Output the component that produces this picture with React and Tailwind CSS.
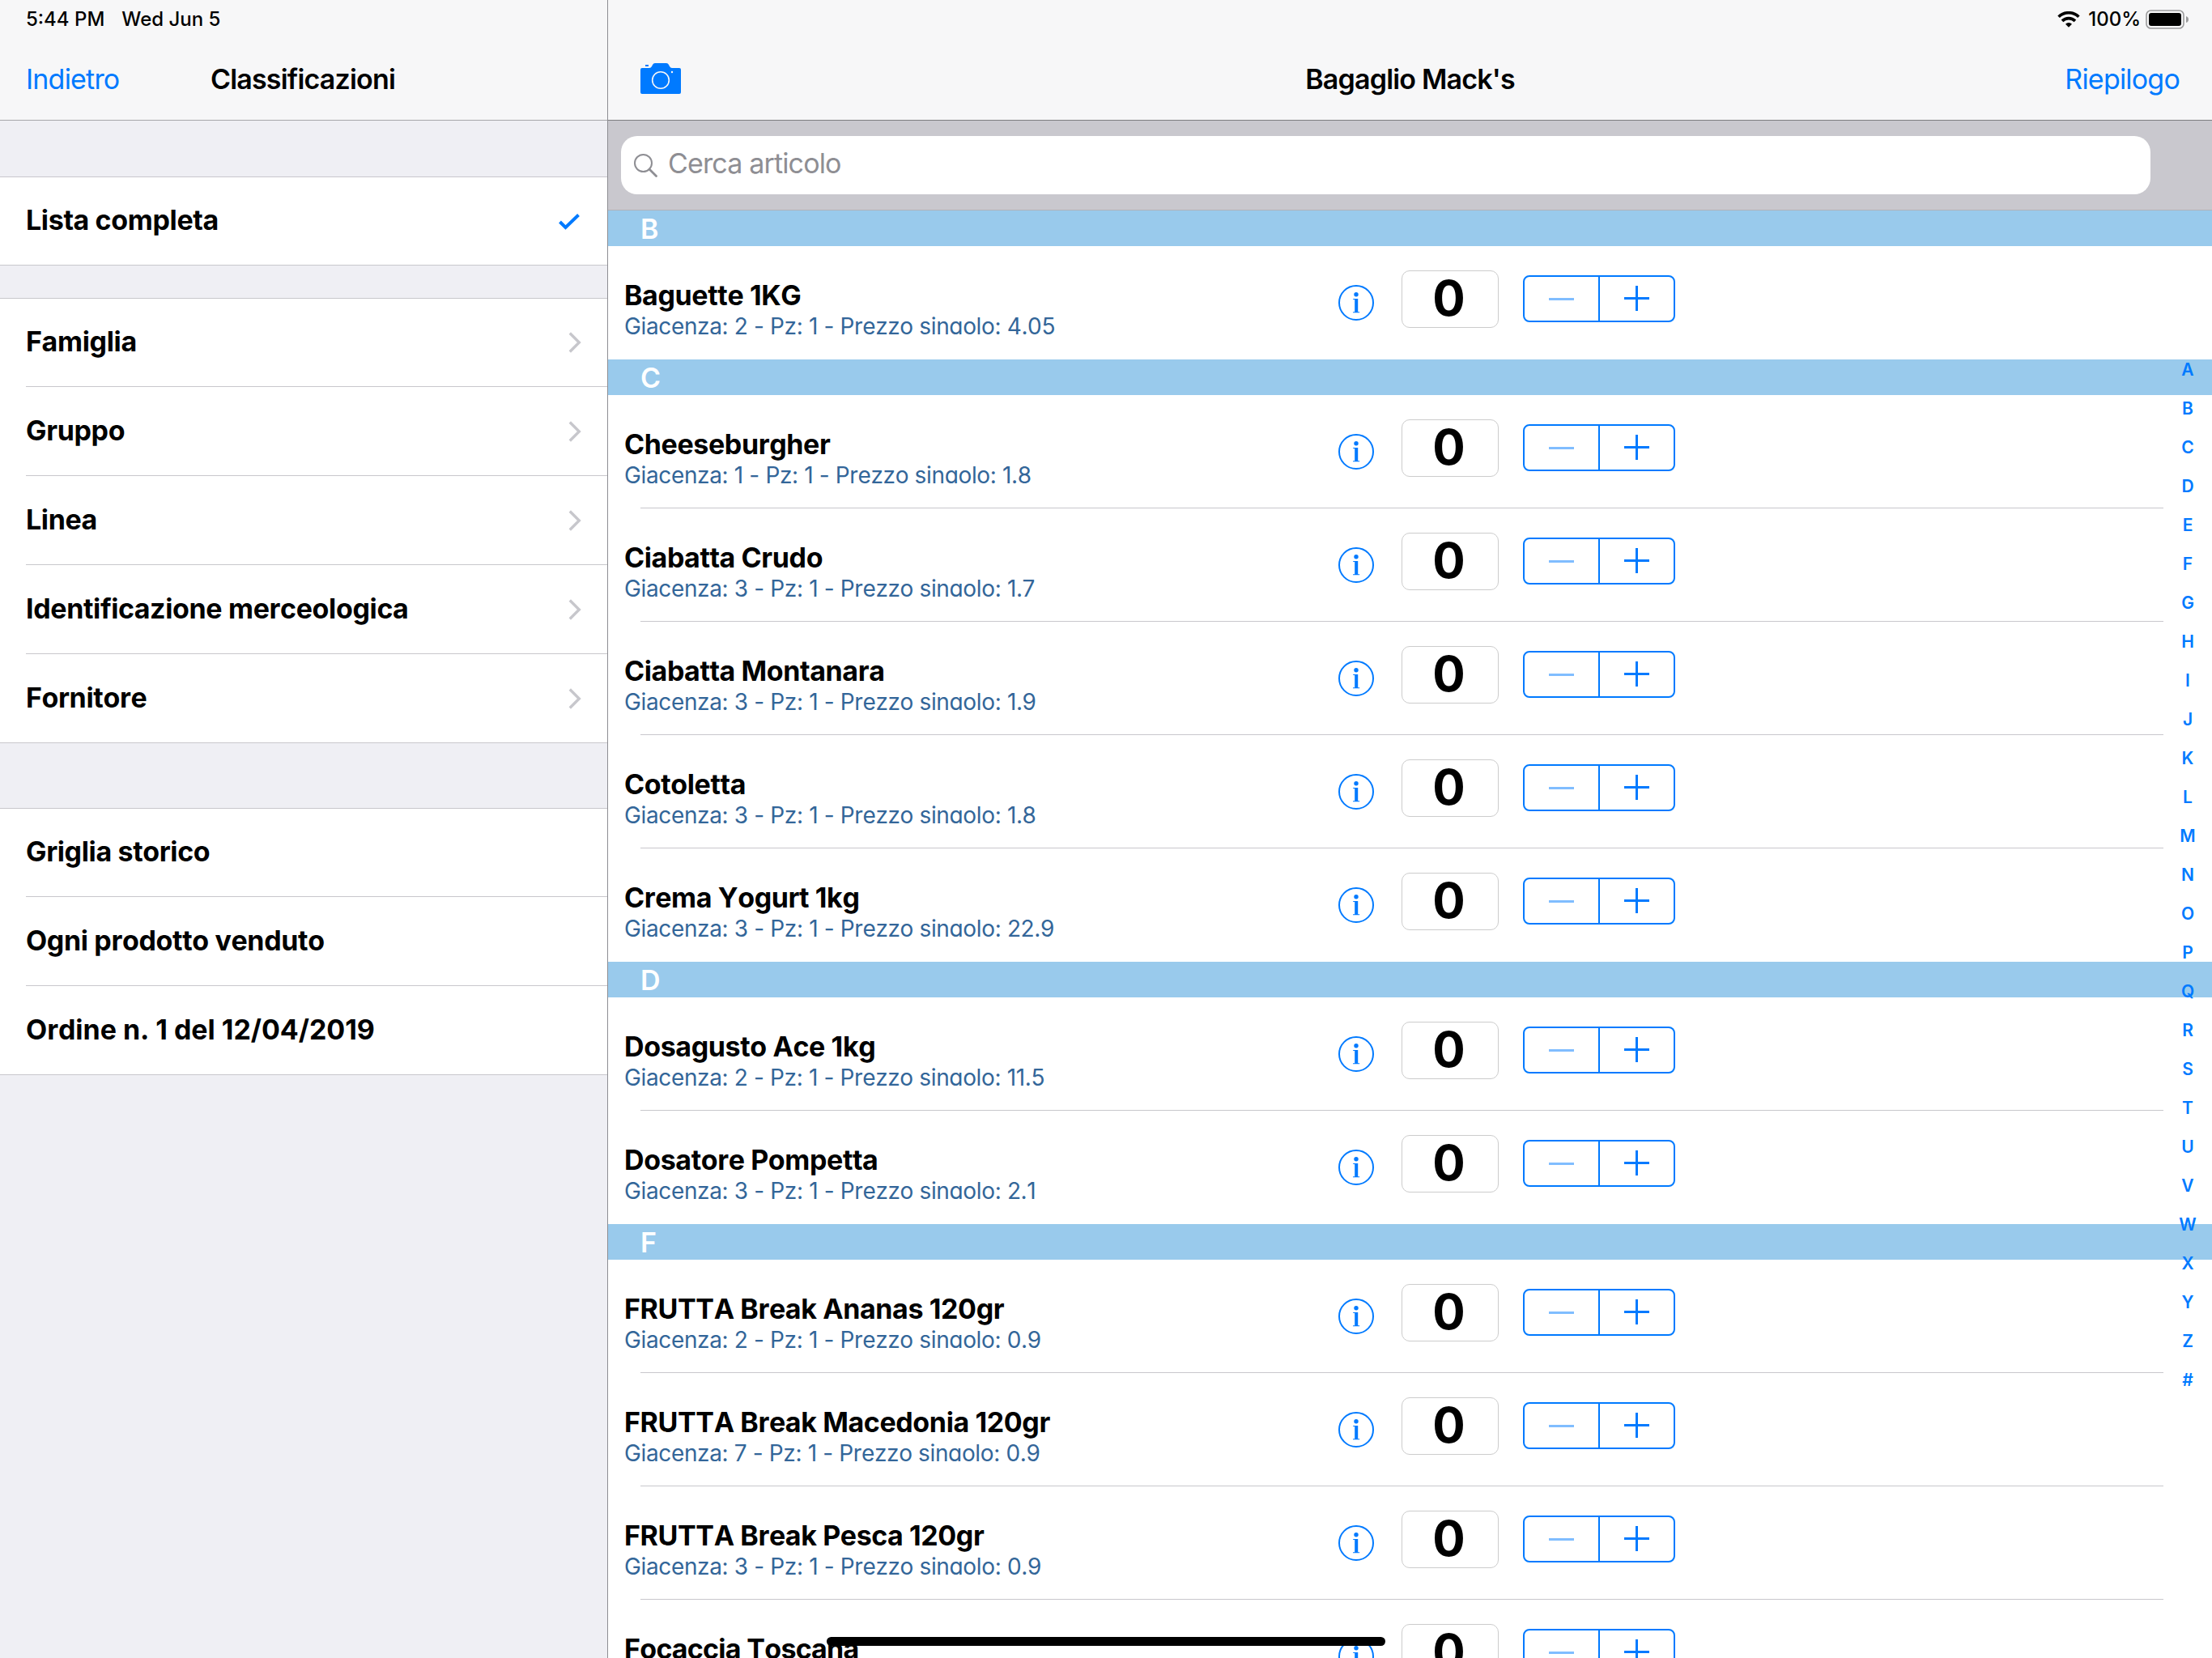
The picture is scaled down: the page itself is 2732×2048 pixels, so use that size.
import React from "react";

const menuGroups = [
  { space: "h-[69px]", items: [{ label: "Lista completa", checked: true }] },
  {
    space: "h-10",
    items: [
      { label: "Famiglia", arrow: true },
      { label: "Gruppo", arrow: true },
      { label: "Linea", arrow: true },
      { label: "Identificazione merceologica", arrow: true },
      { label: "Fornitore", arrow: true },
    ],
  },
  {
    space: "h-20",
    items: [
      { label: "Griglia storico" },
      { label: "Ogni prodotto venduto" },
      { label: "Ordine n. 1 del 12/04/2019", tracking: "tracking-[-0.040px]" },
    ],
  },
];

const sections = [
  { letter: "B", items: [["Baguette 1KG", 2, "4.05"]] },
  {
    letter: "C",
    items: [
      ["Cheeseburgher", 1, "1.8"],
      ["Ciabatta Crudo", 3, "1.7"],
      ["Ciabatta Montanara", 3, "1.9"],
      ["Cotoletta", 3, "1.8"],
      ["Crema Yogurt 1kg", 3, "22.9"],
    ],
  },
  {
    letter: "D",
    items: [
      ["Dosagusto Ace 1kg", 2, "11.5"],
      ["Dosatore Pompetta", 3, "2.1"],
    ],
  },
  {
    letter: "F",
    items: [
      ["FRUTTA Break Ananas 120gr", 2, "0.9"],
      ["FRUTTA Break Macedonia 120gr", 7, "0.9"],
      ["FRUTTA Break Pesca 120gr", 3, "0.9"],
      ["Focaccia Toscana", 3, "1.9", "tracking-[-0.700px]"],
    ],
  },
];

const indexLetters = "ABCDEFGHIJKLMNOPQRSTUVWXYZ#".split("");

const CameraIcon = () => (
  <svg className="w-[50px] h-[38px]" viewBox="0 0 50 38" fill="none">
    <path
      d="M2 6h9q2 0 3-2l1-2q1-2 3-2h14q2 0 3 2l1 2q1 2 3 2h9q2 0 2 2v28q0 2-2 2H2q-2 0-2-2V8q0-2 2-2z"
      fill="#007aff"
    />
    <path d="M6 2h4v2H6z" fill="#007aff" />
    <circle cx="25" cy="21" r="10.300" stroke="#f7f7f8" strokeWidth="1.600" />
    <circle cx="39" cy="11" r="1.200" fill="#f7f7f8" />
  </svg>
);

const WifiIcon = () => (
  <svg className="w-[28px] h-[20px]" viewBox="0 0 28 20" fill="none" stroke="#000" strokeWidth="3.600">
    <path d="M1.600 6.800a17.600 17.600 0 0 1 24.800 0" />
    <path d="M6 11.900a11.400 11.400 0 0 1 16 0" />
    <path d="M14 19.800l-4-4a5.600 5.600 0 0 1 8 0z" fill="#000" stroke="none" />
  </svg>
);

const BatteryIcon = () => (
  <svg className="w-[54px] h-[24px]" viewBox="0 0 54 24" fill="none">
    <rect x="1" y="1" width="46" height="22" rx="5.500" stroke="#9b9b9c" strokeWidth="1.600" />
    <rect x="4" y="4" width="40" height="16" rx="3" fill="#000" />
    <path d="M50 8q3 1 3 4t-3 4z" fill="#9b9b9c" />
  </svg>
);

const SearchIcon = () => (
  <svg className="w-[29px] h-[29px]" viewBox="0 0 29 29" fill="none" stroke="#8e8e93" strokeWidth="2">
    <circle cx="11.500" cy="11.500" r="10.500" />
    <path d="M19 19l8.500 8.500" strokeWidth="2.800" strokeLinecap="round" />
  </svg>
);

const CheckIcon = () => (
  <svg className="w-[26px] h-[20px] mt-[2px]" viewBox="0 0 26 20" fill="none" stroke="#007aff" strokeWidth="4">
    <path d="M1.500 10l7 7L24.500 1.500" />
  </svg>
);

const Chevron = () => (
  <svg className="w-[16px] h-[26px] -mr-[2px]" viewBox="0 0 16 26" fill="none" stroke="#c7c7cc" strokeWidth="3.400">
    <path d="M1.800 1.500L13.300 13 1.800 24.500" />
  </svg>
);

const InfoIcon = () => (
  <svg className="w-[44px] h-[44px]" viewBox="0 0 44 44" fill="none">
    <circle cx="22" cy="22" r="21" stroke="#007aff" strokeWidth="2" />
    <circle cx="22" cy="11.700" r="2.700" fill="#007aff" />
    <path d="M18.200 17h6v16.200h2v1H18v-1h2.200V18h-2z" fill="#007aff" />
  </svg>
);

const Stepper = () => (
  <div className="w-[188px] h-[58px] flex border-2 border-[#007aff] rounded-[8px]">
    <div className="w-[93px] flex items-center justify-center border-r-2 border-[#007aff]">
      <div className="w-[31px] h-[3px] bg-[#80bdff] mt-[1px]"></div>
    </div>
    <div className="flex-1 flex items-center justify-center">
      <svg className="w-[31px] h-[31px] -mt-[1px]" viewBox="0 0 31 31">
        <path d="M0 14h14V0h3v14h14v3H17v14h-3V17H0z" fill="#007aff" />
      </svg>
    </div>
  </div>
);

const MenuItem = ({ item, first, last }) => (
  <div className={`h-[110px] bg-white flex ${first ? "border-t border-[#c8c7cc]" : ""} ${last ? "border-b border-[#c8c7cc]" : "pl-8"}`}>
    <div className={`flex-1 flex items-center justify-between pr-[34px] ${last ? "pl-8" : "border-b border-[#c8c7cc]"}`}>
      <span className={`text-[34px] font-bold whitespace-nowrap [font-kerning:none] mb-[3px] ${item.tracking || "tracking-[-0.350px]"}`}>
        {item.label}
      </span>
      {item.checked && <CheckIcon />}
      {item.arrow && <Chevron />}
    </div>
  </div>
);

const Product = ({ item, last }) => {
  const [name, stock, price, tracking] = item;
  return (
    <div className="h-[140px] shrink-0 relative flex items-start">
      <div className="w-[902px] pl-5 pt-[40px]">
        <div className={`h-[42px] leading-[42px] text-[34px] font-bold whitespace-nowrap [font-kerning:none] ${tracking || "tracking-[-0.380px]"}`}>
          {name}
        </div>
        <div className="h-[27px] leading-[34px] overflow-hidden text-[28px] text-[#336699] tracking-[-0.360px] whitespace-nowrap [font-kerning:none]">
          Giacenza: {stock} - Pz: 1 - Prezzo singolo: {price}
        </div>
      </div>
      <div className="mt-[48px]">
        <InfoIcon />
      </div>
      <div className="ml-[34px] mt-[30px] w-[120px] h-[71px] border border-[#cccccc] rounded-[10px] flex items-center justify-center text-[60px] font-bold">
        <span className="mr-[3px] mb-[3px]">0</span>
      </div>
      <div className="ml-[30px] mt-[36px]">
        <Stepper />
      </div>
      {!last && <div className="absolute left-[40px] right-[60px] bottom-0 h-px bg-[#c8c7cc]"></div>}
    </div>
  );
};

const App = () => {
  return (
    <div className="w-[2732px] h-[2048px] overflow-hidden relative flex font-['Inter',sans-serif] text-black bg-white">
      {/* Sidebar */}
      <aside className="w-[751px] shrink-0 bg-[#efeff4] border-r border-[#8e8e93] flex flex-col">
        <header className="h-[149px] bg-[#f7f7f8] border-b border-[#a7a7aa]">
          <div className="h-12 pl-8 flex items-center gap-[21px] text-[24px] font-medium">
            <span>5:44 PM</span>
            <span>Wed Jun 5</span>
          </div>
          <div className="h-[98px] pl-8 pr-[34px] grid grid-cols-[1fr_auto_1fr] items-center text-[34px] tracking-[-0.800px]">
            <span className="text-[#007aff]">Indietro</span>
            <span className="font-semibold">Classificazioni</span>
          </div>
        </header>
        {menuGroups.map((group, g) => (
          <div key={g}>
            <div className={group.space}></div>
            {group.items.map((item, i) => (
              <MenuItem key={item.label} item={item} first={i === 0} last={i === group.items.length - 1} />
            ))}
          </div>
        ))}
      </aside>

      {/* Article list */}
      <main className="flex-1 flex flex-col">
        <header className="h-[149px] shrink-0 bg-[#f7f7f8] border-b border-[#7d7d80]">
          <div className="h-12 pr-[28px] flex items-center justify-end text-[24px] font-medium">
            <WifiIcon />
            <span className="ml-[10px] mr-[6px]">100%</span>
            <BatteryIcon />
          </div>
          <div className="h-[98px] pl-10 pr-[40px] grid grid-cols-[1fr_auto_1fr] items-center text-[34px] tracking-[-0.800px]">
            <CameraIcon />
            <span className="font-semibold">Bagaglio Mack's</span>
            <span className="text-[#007aff] text-right">Riepilogo</span>
          </div>
        </header>
        <div className="h-[111px] shrink-0 bg-[#c9c8ce] border-b border-[#b2b2b7] pt-[19px] pl-4 pr-[76px]">
          <div className="h-[72px] bg-white rounded-[20px] flex items-center pl-[16px] gap-[13px] text-[34px] tracking-[-0.850px] text-[#8e8e93]">
            <SearchIcon />
            <span className="mb-[5px]">Cerca articolo</span>
          </div>
        </div>
        {sections.map((section) => (
          <section key={section.letter} className="shrink-0">
            <h2 className="h-11 pl-10 bg-[#99caec] text-white text-[34px] font-semibold leading-[46px]">{section.letter}</h2>
            {section.items.map((item, i) => (
              <Product key={item[0]} item={item} last={i === section.items.length - 1} />
            ))}
          </section>
        ))}
      </main>

      {/* Alphabet index */}
      <nav className="absolute right-[16px] top-[433px] w-[28px] text-center text-[21px] font-semibold text-[#007aff]">
        {indexLetters.map((letter) => (
          <div key={letter} className="h-[48px] leading-[47px]">{letter}</div>
        ))}
      </nav>

      <div className="absolute left-[1021px] top-[2022px] w-[690px] h-[11px] rounded-full bg-black"></div>
    </div>
  );
};

export default App;
